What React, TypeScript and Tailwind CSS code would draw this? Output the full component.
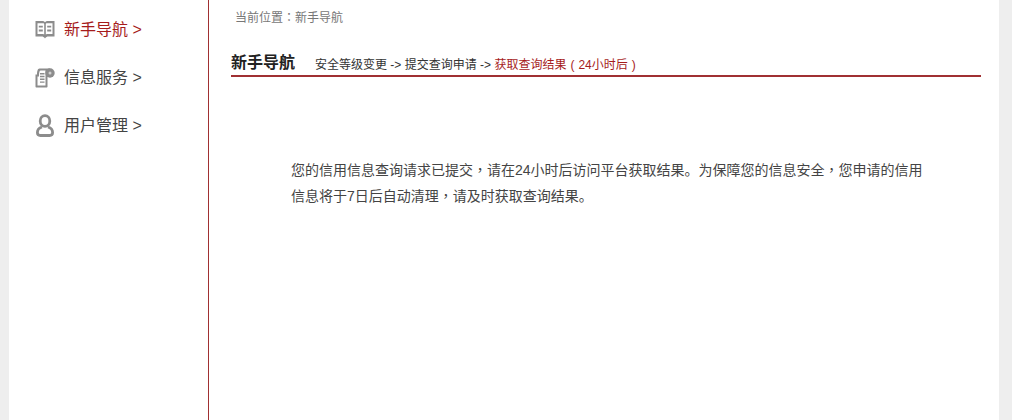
function BookIcon() {
  return (
    <svg width="20" height="20" viewBox="0 0 20 20" fill="none">
      <path d="M0.500 1H7c1.400 0 2.400.5 3 1.300C10.600 1.500 11.600 1 13 1h6.500v15.500H13.500c-1.500 0-2.500.6-3.500 2-1-1.400-2-2-3.500-2H.5z" fill="#8c8c8c" />
      <path d="M2.500 3.200h5.700c.7 0 1 .4 1 1v10.300c-.7-.4-1.500-.5-2.500-.5H2.500zM17.500 3.200h-5.700c-.7 0-1 .4-1 1v10.300c.7-.4 1.500-.5 2.500-.5h4.200z" fill="#fff" />
      <path d="M3.800 5.800h4v1.800h-4zM3.800 9.600h4v1.800h-4zM12.200 5.800h4v1.800h-4zM12.200 9.600h4v1.800h-4z" fill="#8c8c8c" />
    </svg>
  );
}

function ServiceIcon() {
  return (
    <svg width="20" height="20" viewBox="0 0 20 20" fill="none">
      <path d="M4.500 0.500H15V9h-2.500v9.500c0 .6-.4 1-1 1H1.500c-.6 0-1-.4-1-1V6.500H2c0-3 .6-6 2.500-6z" fill="#8c8c8c" />
      <path d="M5.500 2.500h5v15H2.500V8.500h1.500C4 6 4.300 2.500 5.500 2.500z" fill="#fff" />
      <path d="M5 5h4.500v1.400H5zM5 7.800h4.500v1.400H5zM5 10.600h4.500v1.400H5zM5 13.400h4.500v1.400H5z" fill="#8c8c8c" />
      <circle cx="15" cy="5" r="4.700" fill="#8c8c8c" />
      <circle cx="15" cy="5" r="1.500" fill="#d0d0d0" />
    </svg>
  );
}

function UserIcon() {
  return (
    <svg width="20" height="24" viewBox="0 0 20 24" fill="none">
      <ellipse cx="10" cy="7" rx="4.800" ry="5.400" stroke="#8c8c8c" strokeWidth="2.800" />
      <path d="M7 13C3.800 14 2.400 16 2.400 18.500c0 2 1 3 3 3h9.200c2 0 3-1 3-3 0-2.500-1.400-4.500-4.600-5.500" stroke="#8c8c8c" strokeWidth="2.800" />
    </svg>
  );
}

const navItems = [
  { label: '新手导航', icon: <BookIcon />, active: true },
  { label: '信息服务', icon: <ServiceIcon />, active: false },
  { label: '用户管理', icon: <UserIcon />, active: false },
];

// centered full-width punctuation, as in the reference
function Punct({ children }: { children: string }) {
  return <span className="font-['Noto_Sans_CJK_TC',sans-serif] leading-none">{children}</span>;
}

export default function App() {
  return (
    <div className="h-[420px] overflow-hidden bg-[#eeeeee] pl-[9px] pr-[13px] font-['Liberation_Sans','Noto_Sans_CJK_SC',sans-serif]">
      <div className="flex h-full bg-white">
        <aside className="w-[200px] shrink-0 border-r border-[#a03032] pt-[6px] pl-[26px]">
          {navItems.map((item) => (
            <div key={item.label} className="flex h-[48px] items-center">
              <span className="flex w-[29px] justify-start">{item.icon}</span>
              <span className={`text-[16px] leading-[24px] ${item.active ? 'text-[#a61c1c]' : 'text-[#444444]'}`}>
                {item.label} &gt;
              </span>
            </div>
          ))}
        </aside>

        <main className="w-[772px] pl-[22px]">
          <p className="pt-[9px] pl-[4px] text-[12px] leading-[18px] text-[#777777]">
            当前位置<Punct>：</Punct>新手导航
          </p>
          <div className="mt-[18px] flex h-[32px] items-end border-b-2 border-[#a03032]">
            <h2 className="text-[16px] leading-[24px] font-bold text-[#222222]">新手导航</h2>
            <p className="ml-[20px] text-[12px] leading-[20px] text-[#333333]">
              安全等级变更 -&gt; 提交查询申请 -&gt;{' '}
              <span className="text-[#a61c1c]">
                获取查询结果
                <span className="inline-block w-[12px] text-center">(</span>
                24小时后
                <span className="inline-block w-[12px] text-center">)</span>
              </span>
            </p>
          </div>
          <p className="mt-[80px] w-[694px] pl-[60px] text-[14px] leading-[26px] text-[#444444]">
            您的信用信息查询请求已提交<Punct>，</Punct>请在24小时后访问平台获取结果。为保障您的信息安全<Punct>，</Punct>您申请的信用
            <br />
            信息将于7日后自动清理<Punct>，</Punct>请及时获取查询结果。
          </p>
        </main>
      </div>
    </div>
  );
}
